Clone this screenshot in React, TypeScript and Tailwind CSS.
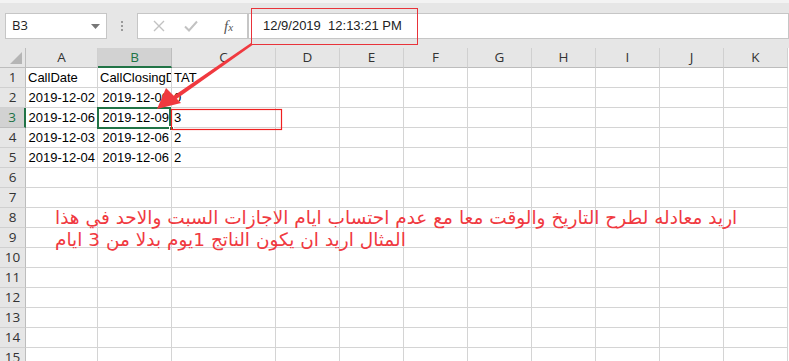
import React from "react";

const cols = [
  { key: "A", w: 72 },
  { key: "B", w: 74 },
  { key: "C", w: 104 },
  { key: "D", w: 64 },
  { key: "E", w: 64 },
  { key: "F", w: 64 },
  { key: "G", w: 64 },
  { key: "H", w: 64 },
  { key: "I", w: 64 },
  { key: "J", w: 64 },
  { key: "K", w: 64 },
];

// cell values: [text, align]
const data: Record<string, [string, "l" | "r"]> = {
  A1: ["CallDate", "l"],
  B1: ["CallClosingD", "l"],
  C1: ["TAT", "l"],
  A2: ["2019-12-02", "r"],
  B2: ["2019-12-09", "r"],
  C2: ["0", "l"],
  A3: ["2019-12-06", "r"],
  B3: ["2019-12-09", "r"],
  C3: ["3", "l"],
  A4: ["2019-12-03", "r"],
  B4: ["2019-12-06", "r"],
  C4: ["2", "l"],
  A5: ["2019-12-04", "r"],
  B5: ["2019-12-06", "r"],
  C5: ["2", "l"],
};

const rows = Array.from({ length: 15 }, (_, i) => i + 1);

const FormulaBar = () => (
  <div className="h-[48px] bg-[#e6e6e6] border-t-[3px] border-[#f3f3f3] flex items-start pt-[10px] pl-[5px]">
    <div className="w-[102px] h-[26px] bg-white border border-[#c6c6c6] flex items-center justify-between pl-[6px] pr-[6px]">
      <span className="text-[13px] text-[#222] font-['Open_Sans',sans-serif]">B3</span>
      <svg width="9" height="5" viewBox="0 0 9 5">
        <path d="M0 0h9L4.5 5z" fill="#777" />
      </svg>
    </div>
    <div className="w-[30px] h-[26px] flex flex-col items-center justify-center gap-[2px]">
      <span className="w-[2px] h-[2px] bg-[#9a9a9a]" />
      <span className="w-[2px] h-[2px] bg-[#9a9a9a]" />
      <span className="w-[2px] h-[2px] bg-[#9a9a9a]" />
    </div>
    <div className="w-[111px] h-[26px] bg-white border border-[#c6c6c6] flex items-center">
      <svg width="12" height="12" viewBox="0 0 12 12" className="ml-[15px]">
        <path d="M1 1l10 10M11 1L1 11" stroke="#c2c2c2" strokeWidth="1.4" />
      </svg>
      <svg width="14" height="12" viewBox="0 0 14 12" className="ml-[19px]">
        <path d="M1 6.5l4 4L13 1.5" stroke="#c2c2c2" strokeWidth="2" fill="none" />
      </svg>
      <span className="ml-[26px] text-[15px] italic text-[#555] font-['Liberation_Serif',serif]">
        f<span className="text-[11px]">x</span>
      </span>
    </div>
    <div className="flex-1 h-[26px] bg-white border border-[#c6c6c6] flex items-center pl-[14px]">
      <span className="text-[13px] text-[#222] whitespace-pre font-['Liberation_Sans',sans-serif]">
        12/9/2019  12:13:21 PM
      </span>
    </div>
  </div>
);

const Sheet = () => (
  <div className="relative font-['Liberation_Sans',sans-serif]">
    {/* header row */}
    <div className="flex h-5">
      <div className="w-[26px] shrink-0 bg-[#e6e6e6] border-r border-b border-[#bdbdbd] relative">
        <svg width="12" height="12" viewBox="0 0 12 12" className="absolute right-[3px] bottom-[3px]">
          <path d="M12 0v12H0z" fill="#b5b5b5" />
        </svg>
      </div>
      {cols.map((c) => (
        <div
          key={c.key}
          style={{ width: c.w }}
          className={
            c.key === "B"
              ? "shrink-0 bg-[#d2d2d2] border-b-2 border-b-[#217346] border-r border-r-[#bdbdbd] flex items-center justify-center text-[13.5px] text-[#217346] font-['Open_Sans',sans-serif]"
              : "shrink-0 bg-[#e6e6e6] border-b border-b-[#bdbdbd] border-r border-r-[#d0d0d0] flex items-center justify-center text-[13.5px] text-[#333] font-['Open_Sans',sans-serif]"
          }
        >
          {c.key}
        </div>
      ))}
    </div>
    {rows.map((r) => (
      <div key={r} className="flex h-5">
        <div
          className={
            r === 3
              ? "w-[26px] shrink-0 bg-[#d2d2d2] border-r-2 border-r-[#217346] border-b border-b-[#bdbdbd] flex items-center justify-center text-[13.5px] text-[#217346] font-['Open_Sans',sans-serif]"
              : "w-[26px] shrink-0 bg-[#e6e6e6] border-r border-r-[#bdbdbd] border-b border-b-[#d0d0d0] flex items-center justify-center text-[13.5px] text-[#333] font-['Open_Sans',sans-serif]"
          }
        >
          {r}
        </div>
        {cols.map((c) => {
          const v = data[c.key + r];
          return (
            <div
              key={c.key}
              style={{ width: c.w }}
              className={
                "shrink-0 border-r border-b border-[#d4d4d4] bg-white overflow-hidden whitespace-nowrap flex items-center text-[13px] text-black px-[2px] " +
                (v && v[1] === "r" ? "justify-end" : "justify-start")
              }
            >
              {v ? v[0] : ""}
            </div>
          );
        })}
      </div>
    ))}

    {/* active cell B3 */}
    <div className="absolute left-[97px] top-[59px] w-[74px] h-[22px] border-2 border-[#217346]" />
    <div className="absolute left-[169px] top-[78px] w-[5px] h-[5px] bg-[#217346] border border-white" />

    {/* arabic note */}
    <div
      dir="rtl"
      className="absolute left-[55px] top-[159px] text-left text-[18.5px] leading-[22px] text-[#f0393f] font-['DejaVu_Sans',sans-serif] whitespace-nowrap"
    >
      <div>اريد معادله لطرح التاريخ والوقت معا مع عدم احتساب ايام الاجازات السبت والاحد في هذا</div>
      <div>المثال اريد ان يكون الناتج 1يوم بدلا من 3 ايام</div>
    </div>
  </div>
);

export default function App() {
  return (
    <div className="relative w-[789px] h-[361px] overflow-hidden bg-white">
      <FormulaBar />
      <Sheet />

      {/* red annotations: boxes and arrow */}
      <svg className="absolute left-0 top-0 pointer-events-none" width="789" height="361" viewBox="0 0 789 361">
        <rect x="251.5" y="8.5" width="166" height="36" fill="none" stroke="#e8333a" strokeWidth="1" />
        <rect x="171.5" y="109.5" width="110" height="20" fill="none" stroke="#f02020" strokeWidth="1.2" />
        <path d="M251 43 L252.5 45 L175 100 L172 97 Z" fill="#f0393f" />
        <path d="M157 109 L166 88 L181 103 Z" fill="#f0393f" />
      </svg>
    </div>
  );
}
